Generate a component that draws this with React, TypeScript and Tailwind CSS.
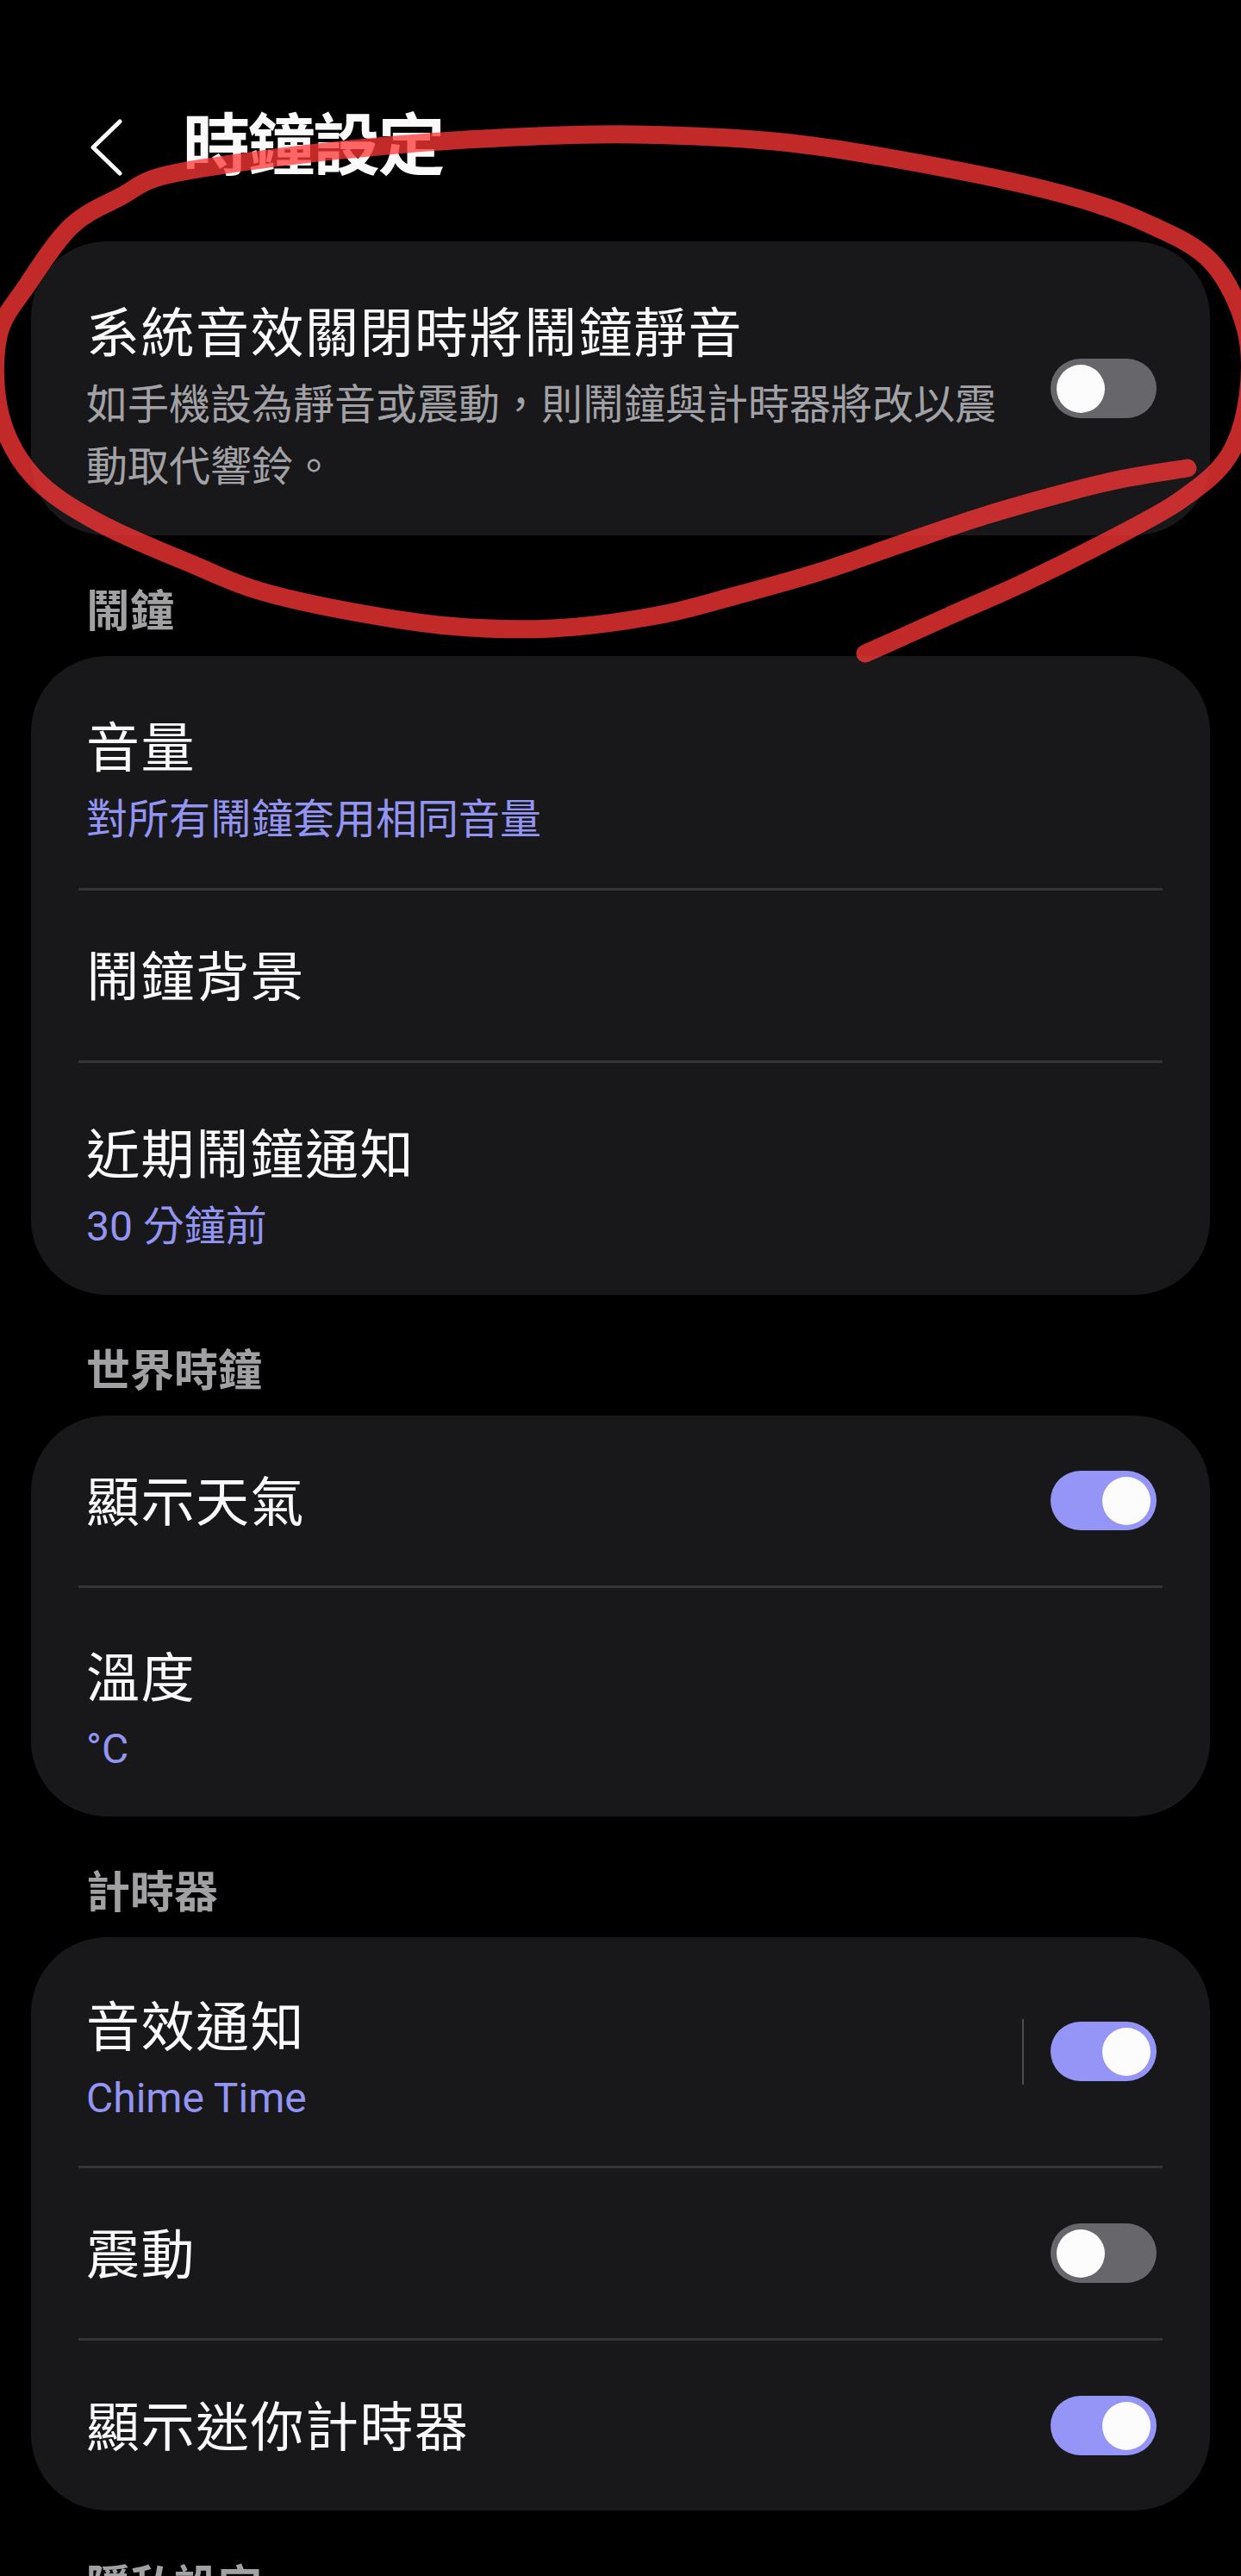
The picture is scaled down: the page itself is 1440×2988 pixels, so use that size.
import React from "react";

type Pt = [number, number];

// hand-drawn red loop around the first card (page coordinates)
const SCRIBBLE: Pt[] = [
    [1378, 543], [1300, 556], [1238, 571], [1143, 598], [1048, 630], [952, 663],
    [857, 690], [762, 714], [640, 729], [520, 726], [400, 708], [300, 685],
    [229, 657], [114, 606], [38, 552], [0, 480], [-2, 390], [32, 330], [83, 262],
    [140, 228], [193, 203], [327, 182], [460, 168], [580, 160], [735, 156],
    [918, 166], [1102, 196], [1240, 227], [1331, 259], [1405, 303], [1445, 380],
    [1448, 460], [1425, 530], [1370, 580], [1290, 625], [1190, 675], [1100, 715],
    [1040, 742], [1004, 758],
];

function smoothPath(pts: Pt[]): string {
    let d = `M${pts[0][0]},${pts[0][1]}`;
    for (let i = 0; i < pts.length - 1; i++) {
        const p0 = pts[i - 1] ?? pts[i];
        const p1 = pts[i];
        const p2 = pts[i + 1];
        const p3 = pts[i + 2] ?? p2;
        const c1x = p1[0] + (p2[0] - p0[0]) / 6;
        const c1y = p1[1] + (p2[1] - p0[1]) / 6;
        const c2x = p2[0] - (p3[0] - p1[0]) / 6;
        const c2y = p2[1] - (p3[1] - p1[1]) / 6;
        d += ` C${c1x},${c1y} ${c2x},${c2y} ${p2[0]},${p2[1]}`;
    }
    return d;
}

function Toggle({ on }: { on: boolean }) {
    return (
        <div
            className={`flex items-center w-[123px] h-[69px] rounded-full px-[7px] flex-shrink-0 ${
                on ? "bg-[#9595f7] justify-end" : "bg-[#67666b] justify-start"
            }`}
        >
            <span className="w-[56px] h-[56px] rounded-full bg-[#fcfcfc]" />
        </div>
    );
}

function Divider() {
    return <div className="h-[3px] mx-[55px] bg-[#353537]" />;
}

function SectionTitle({ label }: { label: string }) {
    return (
        <div className="pt-[59px] pb-[21px] pl-[64px] text-[51px] leading-[60px] font-bold text-[#a1a1a3]">
            {label}
        </div>
    );
}

interface RowProps {
    title: string;
    sub?: string;
    toggle?: boolean;
    split?: boolean;
    tight?: boolean;
}

function Row({ title, sub, toggle, split, tight }: RowProps) {
    const pad = !sub ? "pt-[62px] pb-[55px]" : tight ? "pt-[66px] pb-[42px]" : "pt-[68px] pb-[43px]";
    return (
        <div className="flex items-center pl-[64px] pr-[62px]">
            <div className={`flex-1 min-w-0 ${pad}`}>
                <div className="text-[62px] leading-[80px] tracking-[1.5px] text-[#fafafa]">{title}</div>
                {sub && (
                    <div className={`${tight ? "mt-[5px]" : "mt-[6px]"} text-[48px] leading-[72px] text-[#9494f3]`}>{sub}</div>
                )}
            </div>
            {split && <span className="w-[2px] h-[76px] bg-[#4d4d50] mr-[31px]" />}
            {toggle !== undefined && <Toggle on={toggle} />}
        </div>
    );
}

export default function App() {
    return (
        <div className="relative w-[1440px] h-[2988px] overflow-hidden bg-black font-['Roboto','Noto_Sans_CJK_TC',sans-serif]">
            <header className="flex items-center h-[100px] mt-[121px] mb-[59px] pl-[100px]">
                <svg width="44" height="66" viewBox="0 0 44 66" fill="none">
                    <polyline points="39,3 8,33 39,63" stroke="#fafafa" strokeWidth="5" strokeLinecap="round" strokeLinejoin="round" />
                </svg>
                <h1 className="ml-[68px] text-[78px] leading-[100px] tracking-[-2.5px] font-bold text-[#fafafa]">時鐘設定</h1>
            </header>

            <main className="px-[36px]">
                <section className="flex items-center rounded-[88px] bg-[#18181a] pl-[64px] pr-[62px]">
                    <div className="flex-1 min-w-0 mr-[48px] pt-[68px] pb-[43px]">
                        <div className="text-[62px] leading-[80px] tracking-[1.5px] text-[#fafafa]">系統音效關閉時將鬧鐘靜音</div>
                        <div className="mt-[6px] text-[48px] leading-[72px] text-[#a2a2a6]">
                            如手機設為靜音或震動，則鬧鐘與計時器將改以震動取代響鈴。
                        </div>
                    </div>
                    <Toggle on={false} />
                </section>

                <SectionTitle label="鬧鐘" />
                <section className="rounded-[88px] bg-[#18181a]">
                    <Row title="音量" sub="對所有鬧鐘套用相同音量" />
                    <Divider />
                    <Row title="鬧鐘背景" />
                    <Divider />
                    <Row title="近期鬧鐘通知" sub="30 分鐘前" />
                </section>

                <SectionTitle label="世界時鐘" />
                <section className="rounded-[88px] bg-[#18181a]">
                    <Row title="顯示天氣" toggle={true} />
                    <Divider />
                    <Row title="溫度" sub="°C" tight />
                </section>

                <SectionTitle label="計時器" />
                <section className="rounded-[88px] bg-[#18181a]">
                    <Row title="音效通知" sub="Chime Time" toggle={true} split tight />
                    <Divider />
                    <Row title="震動" toggle={false} />
                    <Divider />
                    <Row title="顯示迷你計時器" toggle={true} />
                </section>

                <SectionTitle label="隱私設定" />
            </main>

            <svg
                className="absolute left-0 top-0 pointer-events-none"
                width="1440"
                height="2988"
                viewBox="0 0 1440 2988"
                fill="none"
            >
                <path
                    d={smoothPath(SCRIBBLE)}
                    stroke="#ff3636"
                    strokeOpacity="0.76"
                    strokeWidth="21"
                    strokeLinecap="round"
                    strokeLinejoin="round"
                />
            </svg>
        </div>
    );
}
